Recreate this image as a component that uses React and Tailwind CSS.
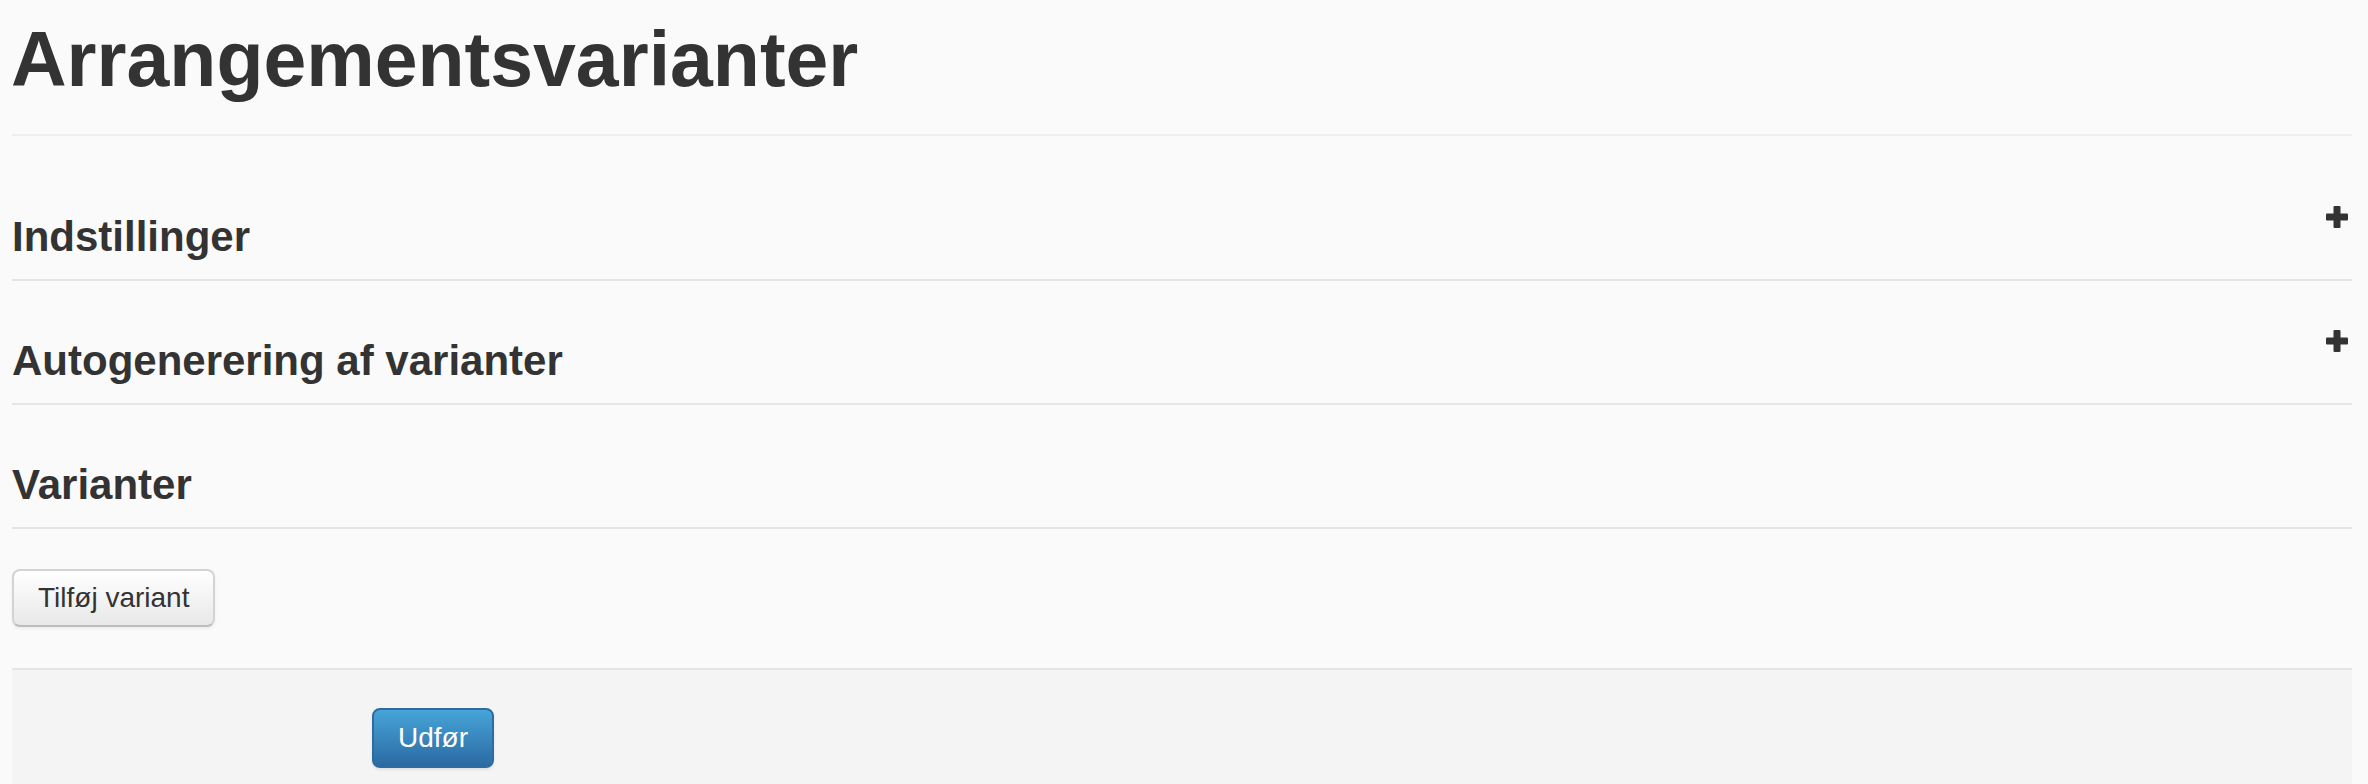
const SECTIONS = [
  { title: 'Indstillinger', collapsible: true },
  { title: 'Autogenerering af varianter', collapsible: true },
  { title: 'Varianter', collapsible: false },
]

function PlusIcon() {
  return (
    <svg width="22" height="22" viewBox="0 0 22 22" className="mt-[9px] mr-[4px] shrink-0">
      <rect x="7.5" y="0" width="7" height="22" rx="1" fill="#333" />
      <rect x="0" y="7.5" width="22" height="7" rx="1" fill="#333" />
    </svg>
  )
}

function Legend({ title, collapsible, first }) {
  return (
    <div
      className={`flex items-start justify-between border-b-2 border-[#e5e5e5] pb-[2px] ${first ? 'mt-[61px]' : 'mt-[40px]'}`}
    >
      <h2 className="text-[42px] font-bold leading-[80px]">{title}</h2>
      {collapsible && <PlusIcon />}
    </div>
  )
}

export default function App() {
  return (
    <div className="min-h-screen overflow-hidden bg-[#fafafa] pl-[12px] pr-[16px] font-['Liberation_Sans',Arial,sans-serif] text-[#333]">
      <div className="border-b-2 border-[#eeeeee] pt-[19px] pb-[35px]">
        <h1 className="-ml-[1px] text-[77px] font-bold leading-[80px]">Arrangementsvarianter</h1>
      </div>

      {SECTIONS.map((section, i) => (
        <Legend key={section.title} {...section} first={i === 0} />
      ))}

      <div className="mt-[40px]">
        <button
          type="button"
          className="h-[58px] rounded-[8px] border-2 border-[#d3d3d3] border-b-[#bdbdbd] bg-gradient-to-b from-white to-[#e8e8e8] px-[24px] text-[28px] leading-[40px] text-[#333] shadow-[0_2px_3px_rgba(0,0,0,0.06)]"
        >
          Tilføj variant
        </button>
      </div>

      <div className="mt-[41px] h-[200px] border-t-2 border-[#e5e5e5] bg-[#f4f4f4] pt-[38px] pl-[360px]">
        <button
          type="button"
          className="h-[60px] w-[122px] rounded-[8px] border-2 border-[#2d6ca2] bg-gradient-to-b from-[#47a5d9] to-[#2b6aa3] text-[28px] leading-[40px] text-white shadow-[0_2px_3px_rgba(0,0,0,0.08)]"
        >
          Udfør
        </button>
      </div>
    </div>
  )
}
